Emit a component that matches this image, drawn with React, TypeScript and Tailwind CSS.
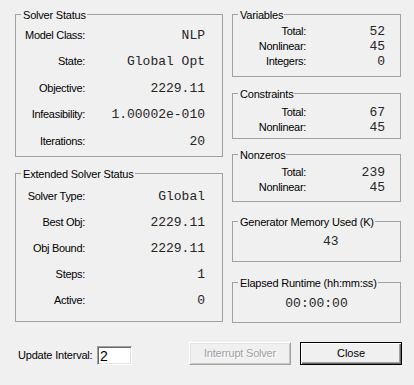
import React from "react";

const MONO = "font-['Liberation_Mono','Courier_New',monospace] text-[13px] leading-[15px] text-[#262626]";

function Group({ title, className, children }: { title: string; className: string; children?: React.ReactNode }) {
  return (
    <div className={`relative border border-[#a0a0a0] ${className}`}>
      <span className="absolute left-[5px] top-[-6px] bg-[#f0f0f0] pl-[2px] pr-[1px] text-[11px] leading-[13px] tracking-[-0.2px] text-black whitespace-nowrap">
        {title}
      </span>
      {children}
    </div>
  );
}

function LeftRow({ label, value }: { label: string; value: string }) {
  return (
    <div className="flex h-[26.5px] items-center">
      <span className="w-[69px] shrink-0 text-right text-[11px] leading-[13px] tracking-[-0.3px]">{label}</span>
      <span className={`flex-1 text-right ${MONO}`}>{value}</span>
    </div>
  );
}

function RightRow({ label, value }: { label: string; value: string }) {
  return (
    <div className="flex h-[15px] items-center">
      <span className="w-[73px] shrink-0 text-right text-[11px] leading-[13px] tracking-[-0.3px]">{label}</span>
      <span className={`flex-1 text-right ${MONO}`}>{value}</span>
    </div>
  );
}

export default function App() {
  return (
    <div className="h-[385px] w-[414px] overflow-hidden bg-[#f0f0f0] pt-[14px] font-['Liberation_Sans',Arial,sans-serif] text-black">
      <div className="ml-[15px] flex gap-[9px]">
        {/* Left column */}
        <div className="flex w-[208px] flex-col">
          <Group title="Solver Status" className="h-[143px] pt-[7px] pr-[17px]">
            <LeftRow label="Model Class:" value="NLP" />
            <LeftRow label="State:" value="Global Opt" />
            <LeftRow label="Objective:" value="2229.11" />
            <LeftRow label="Infeasibility:" value="1.00002e-010" />
            <LeftRow label="Iterations:" value="20" />
          </Group>
          <Group title="Extended Solver Status" className="mt-[16px] h-[149px] pt-[9px] pr-[17px]">
            <div className="flex flex-col [&>div]:h-[26px]">
              <LeftRow label="Solver Type:" value="Global" />
              <LeftRow label="Best Obj:" value="2229.11" />
              <LeftRow label="Obj Bound:" value="2229.11" />
              <LeftRow label="Steps:" value="1" />
              <LeftRow label="Active:" value="0" />
            </div>
          </Group>
        </div>

        {/* Right column */}
        <div className="flex w-[169px] flex-col">
          <Group title="Variables" className="h-[63px] pt-[9px] pr-[15px]">
            <RightRow label="Total:" value="52" />
            <RightRow label="Nonlinear:" value="45" />
            <RightRow label="Integers:" value="0" />
          </Group>
          <Group title="Constraints" className="mt-[16px] h-[46px] pt-[11px] pr-[15px]">
            <RightRow label="Total:" value="67" />
            <RightRow label="Nonlinear:" value="45" />
          </Group>
          <Group title="Nonzeros" className="mt-[15px] h-[48px] pt-[10px] pr-[15px]">
            <RightRow label="Total:" value="239" />
            <RightRow label="Nonlinear:" value="45" />
          </Group>
          <Group title="Generator Memory Used (K)" className="mt-[19px] flex h-[41px] items-center pl-[90px]">
            <span className={MONO}>43</span>
          </Group>
          <Group title="Elapsed Runtime (hh:mm:ss)" className="mt-[20px] flex h-[41px] items-center justify-center pt-[2px]">
            <span className={MONO}>00:00:00</span>
          </Group>
        </div>
      </div>

      {/* Bottom row */}
      <div className="mt-[19px] flex items-end">
        <span className="ml-[18px] w-[79px] text-[11px] leading-[19px] tracking-[-0.2px]">Update Interval:</span>
        <div className="flex h-[19px] w-[35px] items-center border border-t-[#a0a0a0] border-l-[#a0a0a0] border-b-white border-r-white bg-white pl-[2px] shadow-[inset_1px_1px_0_#696969,inset_-1px_-1px_0_#e3e3e3] text-[14px] leading-none">
          2
        </div>
        <button
          disabled
          className="ml-[57px] flex h-[23px] w-[102px] items-center justify-center border border-t-white border-l-white border-b-[#a0a0a0] border-r-[#a0a0a0] bg-[#f0f0f0] shadow-[inset_1px_1px_0_#e3e3e3,inset_-1px_-1px_0_#c8c8c8] text-[11px] tracking-[-0.2px] text-[#a0a0a0] [text-shadow:1px_1px_0_#ffffff]"
        >
          Interrupt Solver
        </button>
        <button className="ml-[9px] flex h-[23px] w-[102px] items-center justify-center border border-black bg-[#f0f0f0] shadow-[inset_1px_1px_0_#ffffff,inset_-1px_-1px_0_#696969,inset_-2px_-2px_0_#a0a0a0] text-[11px] text-black">
          Close
        </button>
      </div>
    </div>
  );
}
